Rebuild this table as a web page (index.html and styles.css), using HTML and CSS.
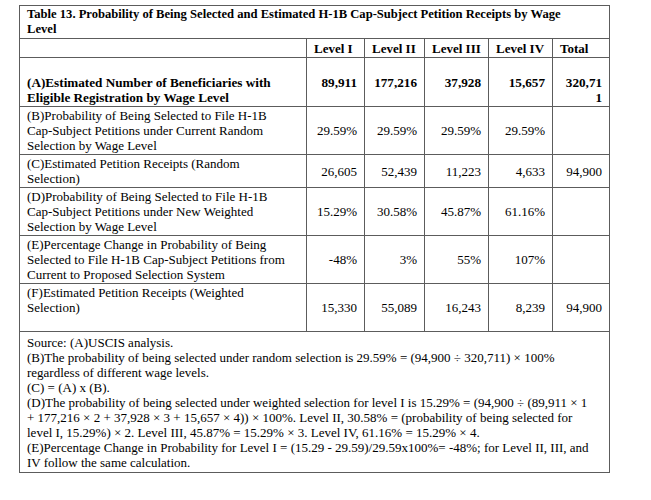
FILE: index.html
```html
<!DOCTYPE html>
<html>
<head>
<meta charset="utf-8">
<link rel="stylesheet" href="styles.css">
</head>
<body>
<table class="wage-table">
  <colgroup>
    <col class="c-label"><col class="c-l1"><col class="c-l2"><col class="c-l3"><col class="c-l4"><col class="c-total">
  </colgroup>
  <tr class="title-row">
    <td colspan="6">Table 13. Probability of Being Selected and Estimated H-1B Cap-Subject Petition Receipts by Wage<br>Level</td>
  </tr>
  <tr class="head-row">
    <th></th><th>Level I</th><th>Level II</th><th>Level III</th><th>Level IV</th><th>Total</th>
  </tr>
  <tr class="row-a">
    <td class="label">(A)Estimated Number of Beneficiaries with<br>Eligible Registration by Wage Level</td>
    <td class="num">89,911</td><td class="num">177,216</td><td class="num">37,928</td><td class="num">15,657</td><td class="num">320,71<br>1</td>
  </tr>
  <tr>
    <td class="label">(B)Probability of Being Selected to File H-1B<br>Cap-Subject Petitions under Current Random<br>Selection by Wage Level</td>
    <td class="num">29.59%</td><td class="num">29.59%</td><td class="num">29.59%</td><td class="num">29.59%</td><td class="num"></td>
  </tr>
  <tr>
    <td class="label">(C)Estimated Petition Receipts (Random<br>Selection)</td>
    <td class="num">26,605</td><td class="num">52,439</td><td class="num">11,223</td><td class="num">4,633</td><td class="num">94,900</td>
  </tr>
  <tr>
    <td class="label">(D)Probability of Being Selected to File H-1B<br>Cap-Subject Petitions under New Weighted<br>Selection by Wage Level</td>
    <td class="num">15.29%</td><td class="num">30.58%</td><td class="num">45.87%</td><td class="num">61.16%</td><td class="num"></td>
  </tr>
  <tr>
    <td class="label">(E)Percentage Change in Probability of Being<br>Selected to File H-1B Cap-Subject Petitions from<br>Current to Proposed Selection System</td>
    <td class="num">-48%</td><td class="num">3%</td><td class="num">55%</td><td class="num">107%</td><td class="num"></td>
  </tr>
  <tr class="row-f">
    <td class="label">(F)Estimated Petition Receipts (Weighted<br>Selection)</td>
    <td class="num">15,330</td><td class="num">55,089</td><td class="num">16,243</td><td class="num">8,239</td><td class="num">94,900</td>
  </tr>
  <tr class="notes-row">
    <td colspan="6">
      <span class="line">Source: (A)USCIS analysis.</span>
      <span class="line">(B)The probability of being selected under random selection is 29.59% = (94,900 ÷ 320,711) × 100%</span>
      <span class="line">regardless of different wage levels.</span>
      <span class="line">(C) = (A) x (B).</span>
      <span class="line">(D)The probability of being selected under weighted selection for level I is 15.29% = (94,900 ÷ (89,911 × 1</span>
      <span class="line">+ 177,216 × 2 + 37,928 × 3 + 15,657 × 4)) × 100%. Level II, 30.58% = (probability of being selected for</span>
      <span class="line">level I, 15.29%) × 2. Level III, 45.87% = 15.29% × 3. Level IV, 61.16% = 15.29% × 4.</span>
      <span class="line">(E)Percentage Change in Probability for Level I = (15.29 - 29.59)/29.59x100%= -48%; for Level II, III, and</span>
      <span class="line">IV follow the same calculation.</span>
    </td>
  </tr>
</table>
</body>
</html>
```

FILE: styles.css
```css
html, body {
  margin: 0;
  background: #fff;
}
body {
  padding: 5px 0 0 19px;
  font-family: "Liberation Serif", "Times New Roman", serif;
  font-size: 13px;
  line-height: 15px;
  color: #000;
}
.wage-table {
  border-collapse: collapse;
  table-layout: fixed;
  width: 590px;
  border: 1px solid #3a3a3a;
}
.c-label { width: 287px; }
.c-l1 { width: 58px; }
.c-l2 { width: 60px; }
.c-l3 { width: 64px; }
.c-l4 { width: 64px; }
.c-total { width: 57px; }
.wage-table td,
.wage-table th {
  border: 1px solid #5c5c5c;
  padding: 1px 7px 1px 7px;
  vertical-align: middle;
  text-align: left;
}
.title-row td {
  font-weight: bold;
  font-size: 12.6px;
}
.head-row th {
  font-weight: bold;
  padding-top: 2px;
  padding-bottom: 1px;
}
.num {
  text-align: right !important;
}
.row-a td {
  font-weight: bold;
  font-size: 13.2px;
  vertical-align: top;
  padding-top: 17px;
}
.row-f .label {
  padding-bottom: 16px;
}
.notes-row td {
  padding: 3px 7px 2px 7px;
}
.line {
  display: block;
  white-space: nowrap;
}
```
